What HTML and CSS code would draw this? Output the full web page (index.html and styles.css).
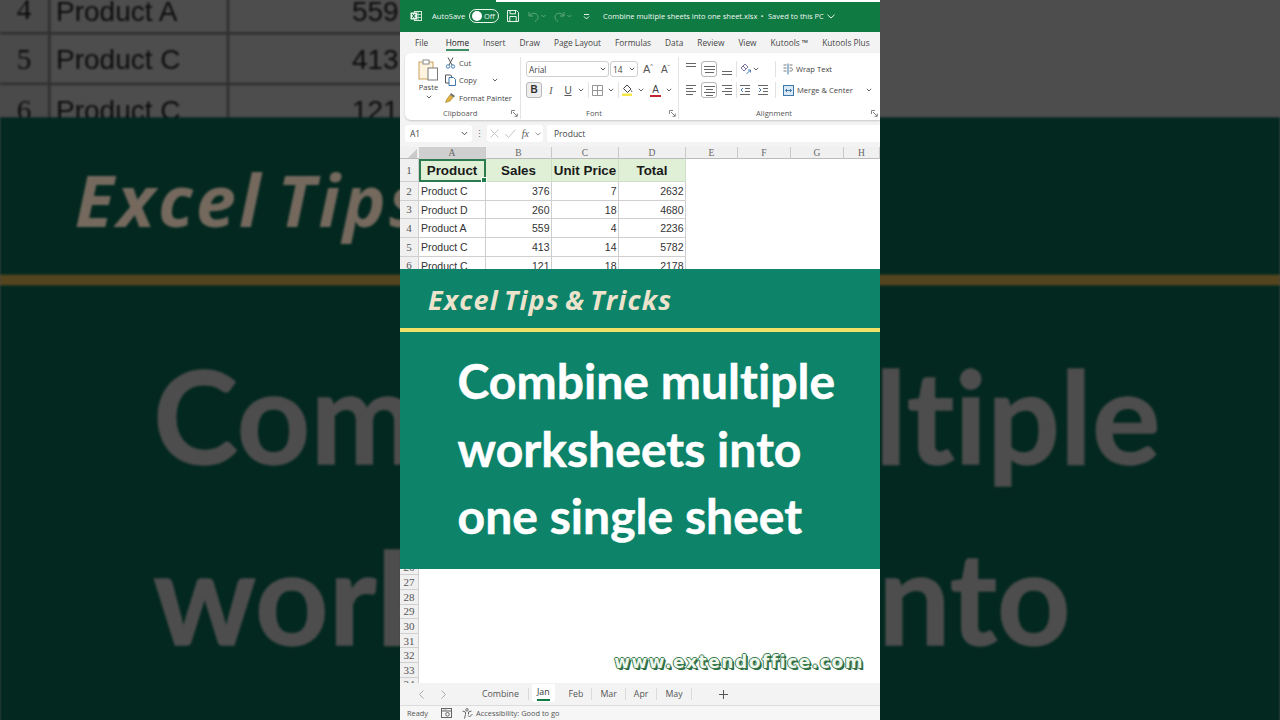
FILE: index.html
```html
<!DOCTYPE html>
<html lang="en">
<head>
<meta charset="utf-8">
<title>Combine multiple worksheets into one single sheet</title>
<link rel="stylesheet" href="styles.css">
</head>
<body>
<div class="stage">
  <div class="backdrop" aria-hidden="true">
    <div class="sheet backdrop-sheet">
      <div class="row"><span class="rh">4</span><span class="c">Product A</span><span class="c n">559</span><span class="c n">4</span><span class="c n">2236</span></div>
      <div class="row"><span class="rh">5</span><span class="c">Product C</span><span class="c n">413</span><span class="c n">14</span><span class="c n">5782</span></div>
      <div class="row"><span class="rh">6</span><span class="c">Product C</span><span class="c n">121</span><span class="c n">18</span><span class="c n">2178</span></div>
    </div>
    <div class="banner">
      <div class="eyebrow">Excel Tips &amp; Tricks</div>
      <h1 class="headline">Combine multiple<br>worksheets into<br>one single sheet</h1>
    </div>
  </div>

  <main class="panel">
    <header class="titlebar">
      <svg class="ico i-xl" width="12" height="12" viewBox="0 0 12 12"><rect x="4.5" y="1.5" width="7" height="9" fill="none" stroke="#d5e9dc"/><path d="M5 4.5h6M5 7.5h6M8 2v8" stroke="#d5e9dc" stroke-width=".8"/><rect x=".5" y="2.5" width="6.5" height="7" fill="#eef6f1"/><path d="M2.2 4l3 4M5.2 4l-3 4" stroke="#107c41" stroke-width="1.1"/></svg>
      <span class="autosave">AutoSave</span>
      <span class="toggle"><span class="knob"></span><span class="off">Off</span></span>
      <svg class="ico i-save" width="12" height="12" viewBox="0 0 12 12" fill="none" stroke="#e8f3ec" stroke-width="1"><path d="M.5.500h9l2 2v9H.5z"/><path d="M3 .8v3h5.500v-3M2.800 11V6.500h6.400V11"/></svg>
      <svg class="ico i-undo" width="11" height="11" viewBox="0 0 11 11" fill="none" stroke="#5fa67f" stroke-width="1"><path d="M1 1v4h4M1.300 5C3 2 7 1.500 9 3.500c2 2.200 1 5-2 7"/></svg>
      <svg class="ico i-chev dim-chev" width="5" height="4" viewBox="0 0 5 4" fill="none" stroke="#5fa67f"><path d="M.5 1l2 2 2-2"/></svg>
      <svg class="ico i-redo" width="11" height="11" viewBox="0 0 11 11" fill="none" stroke="#5fa67f" stroke-width="1"><path d="M10 1v4H6M9.700 5C8 2 4 1.500 2 3.500c-2 2.200-1 5 2 7"/></svg>
      <svg class="ico i-chev dim-chev" width="5" height="4" viewBox="0 0 5 4" fill="none" stroke="#5fa67f"><path d="M.5 1l2 2 2-2"/></svg>
      <svg class="ico i-custom" width="7" height="7" viewBox="0 0 7 7" fill="none" stroke="#e8f3ec"><path d="M1 1.500h5M1 3.500l2.500 2.500L6 3.500"/></svg>
      <span class="doc">Combine multiple sheets into one sheet.xlsx</span>
      <span class="doc-dot">•</span>
      <span class="doc">Saved to this PC</span>
      <svg class="ico i-doc-chev" width="8" height="5" viewBox="0 0 8 5" fill="none" stroke="#e8f3ec"><path d="M.5.800L4 4l3.500-3.200"/></svg>
    </header>

    <nav class="tabs">
      <span class="first">File</span><span class="on">Home</span><span>Insert</span><span>Draw</span><span>Page Layout</span><span>Formulas</span><span>Data</span><span>Review</span><span>View</span><span>Kutools ™</span><span>Kutools Plus</span>
    </nav>

    <section class="ribbon">
      <div class="grp g-clip">
        <div class="grp-body clip-body">
          <div class="paste">
            <svg width="21" height="22" viewBox="0 0 21 22" fill="none"><rect x="1" y="3" width="14" height="17" fill="#fdf3df" stroke="#c9a25c"/><rect x="5" y="1" width="6" height="4" fill="#fff" stroke="#8a8a8a"/><rect x="10" y="9" width="9.500" height="12" fill="#fff" stroke="#7a7a7a"/></svg>
            <span>Paste</span>
            <svg class="chev" width="6" height="4" viewBox="0 0 6 4" fill="none" stroke="#666"><path d="M.8.800L3 3l2.200-2.200"/></svg>
          </div>
          <ul class="clip-list">
            <li><svg width="10" height="12" viewBox="0 0 10 12" fill="none" stroke="#555"><path d="M2.500 .5L6.500 8M7.500 .5L3.500 8"/><circle cx="2.500" cy="9.500" r="1.700" stroke="#4a7fb5"/><circle cx="7.500" cy="9.500" r="1.700" stroke="#4a7fb5"/></svg><span>Cut</span></li>
            <li><svg width="11" height="12" viewBox="0 0 11 12" fill="none" stroke="#555"><path d="M.5 1h5l1 1v7h-6z"/><path d="M4 3.500h4.500l2 2v6H4z" fill="#fff" stroke="#3f78ad"/></svg><span>Copy</span><svg class="copy-chev" width="6" height="4" viewBox="0 0 6 4" fill="none" stroke="#666"><path d="M.8.800L3 3l2.200-2.200"/></svg></li>
            <li><svg width="11" height="11" viewBox="0 0 11 11"><path d="M6 1l4 3-1.500 1.500-3.500-3z" fill="#6d6d6d"/><path d="M5 3l3 2.500L5 9 .5 10.500 2 7z" fill="#e2b13c" stroke="#8a6a18" stroke-width=".5"/></svg><span>Format Painter</span></li>
          </ul>
        </div>
        <div class="grp-foot"><i></i><span>Clipboard</span><svg class="launch" width="7" height="7" viewBox="0 0 7 7" fill="none" stroke="#777" stroke-width=".9"><path d="M.5 4V.5H4M2 2l4 4M3.500 6.300h2.800V3.500"/></svg></div>
      </div>

      <div class="grp g-font">
        <div class="grp-body font-body">
          <div class="font-row">
            <span class="sel sel-name">Arial<svg width="6" height="4" viewBox="0 0 6 4" fill="none" stroke="#555"><path d="M.8.800L3 3l2.200-2.200"/></svg></span>
            <span class="sel sel-size">14<svg width="6" height="4" viewBox="0 0 6 4" fill="none" stroke="#555"><path d="M.8.800L3 3l2.200-2.200"/></svg></span>
            <span class="grow">A<sup>^</sup></span>
            <span class="grow shrink">A<sup>ˇ</sup></span>
          </div>
          <div class="font-row row-b">
            <span class="fbtn bold">B</span>
            <span class="fbtn ital">I</span>
            <span class="fbtn und">U</span>
            <svg class="mini" width="6" height="4" viewBox="0 0 6 4" fill="none" stroke="#666"><path d="M.8.800L3 3l2.200-2.200"/></svg>
            <i class="vsep"></i>
            <svg class="i-border" width="11" height="11" viewBox="0 0 11 11" fill="none" stroke="#8a8a8a" stroke-width=".9"><path d="M.5.500h10v10H.500zM5.500.5v10M.5 5.500h10"/></svg>
            <svg class="mini" width="6" height="4" viewBox="0 0 6 4" fill="none" stroke="#666"><path d="M.8.800L3 3l2.200-2.200"/></svg>
            <i class="vsep"></i>
            <svg class="i-fill" width="11" height="12" viewBox="0 0 11 12" fill="none"><path d="M5 1l4 4-3.500 3.500-4-4z" stroke="#444"/><path d="M9.500 6c.8 1 1 1.500.5 2-.6.300-1-.4-.5-2z" fill="#444"/><rect x="0" y="9.500" width="10" height="2.500" fill="#f6e84a"/></svg>
            <svg class="mini" width="6" height="4" viewBox="0 0 6 4" fill="none" stroke="#666"><path d="M.8.800L3 3l2.200-2.200"/></svg>
            <span class="color-a">A</span>
            <svg class="mini" width="6" height="4" viewBox="0 0 6 4" fill="none" stroke="#666"><path d="M.8.800L3 3l2.200-2.200"/></svg>
          </div>
        </div>
        <div class="grp-foot"><i></i><span>Font</span><svg class="launch" width="7" height="7" viewBox="0 0 7 7" fill="none" stroke="#777" stroke-width=".9"><path d="M.5 4V.5H4M2 2l4 4M3.500 6.300h2.800V3.500"/></svg></div>
      </div>

      <div class="grp g-align">
        <div class="grp-body align-body">
          <div class="align-row">
            <svg class="al" width="10" height="16" viewBox="0 0 10 16" stroke="#666"><path d="M0 2.500h10M0 5.500h10"/></svg>
            <span class="boxed"><svg width="11" height="8" viewBox="0 0 11 8" stroke="#666"><path d="M0 1.500h11M0 4.500h11M1 7.500h9"/></svg></span>
            <svg class="al" width="10" height="16" viewBox="0 0 10 16" stroke="#666"><path d="M0 10.500h10M0 13.500h10"/></svg>
            <i class="vsep"></i>
            <svg class="orient" width="11" height="12" viewBox="0 0 11 12" fill="none" stroke="#7a74a8"><path d="M1 5l4-4 3 3-4 4zM3 3l3 3"/><path d="M6.500 11l4-4M8 7h2.500v2.500" stroke="#4a7fb5"/></svg>
            <svg class="mini" width="6" height="4" viewBox="0 0 6 4" fill="none" stroke="#666"><path d="M.8.800L3 3l2.200-2.200"/></svg>
            <i class="vsep tall"></i>
            <span class="wide"><svg width="10" height="12" viewBox="0 0 10 12" fill="none" stroke="#3f78ad"><path d="M5 .5v11"/><path d="M.5 2h3M.5 5h3M.5 8h3M6.500 2h3M6.500 5h1.500c2 0 2 3 0 3H6.500" stroke="#777"/></svg><span>Wrap Text</span></span>
          </div>
          <div class="align-row">
            <svg class="al" width="10" height="12" viewBox="0 0 10 12" stroke="#666"><path d="M0 1.500h10M0 4.500h7M0 7.500h10M0 10.500h7"/></svg>
            <span class="boxed"><svg width="11" height="11" viewBox="0 0 11 11" stroke="#666"><path d="M0 1.500h11M2 4.500h7M0 7.500h11M2 10.500h7"/></svg></span>
            <svg class="al" width="10" height="12" viewBox="0 0 10 12" stroke="#666"><path d="M0 1.500h10M3 4.500h7M0 7.500h10M3 10.500h7"/></svg>
            <i class="vsep"></i>
            <svg class="ind" width="10" height="10" viewBox="0 0 10 10" fill="none" stroke="#666"><path d="M0 .5h10M5 3.500h5M5 6.500h5M0 9.500h10"/><path d="M3 3L1 5l2 2" stroke="#3f78ad"/></svg>
            <svg class="ind ind2" width="10" height="10" viewBox="0 0 10 10" fill="none" stroke="#666"><path d="M0 .5h10M5 3.500h5M5 6.500h5M0 9.500h10"/><path d="M1 3l2 2-2 2" stroke="#3f78ad"/></svg>
            <i class="vsep tall"></i>
            <span class="wide"><svg width="11" height="11" viewBox="0 0 11 11" fill="#dbe9f5" stroke="#3f78ad"><rect x=".5" y=".5" width="10" height="10"/><path d="M2.500 5.500h6M4 4L2.500 5.500 4 7M7 4l1.500 1.500L7 7" fill="none"/></svg><span>Merge &amp; Center</span><svg class="merge-chev" width="6" height="4" viewBox="0 0 6 4" fill="none" stroke="#666"><path d="M.8.800L3 3l2.200-2.200"/></svg></span>
          </div>
        </div>
        <div class="grp-foot"><i></i><span>Alignment</span><svg class="launch" width="7" height="7" viewBox="0 0 7 7" fill="none" stroke="#777" stroke-width=".9"><path d="M.5 4V.5H4M2 2l4 4M3.500 6.300h2.800V3.500"/></svg></div>
      </div>
    </section>

    <div class="fbar">
      <span class="namebox">A1<svg width="7" height="5" viewBox="0 0 7 5" fill="none" stroke="#555"><path d="M.8 1L3.500 3.800 6.200 1"/></svg></span>
      <span class="dots">⋮</span>
      <span class="fx-btns">
        <svg width="9" height="9" viewBox="0 0 9 9" stroke="#c4c4c4" fill="none"><path d="M.5.500l8 8M8.500.500l-8 8"/></svg>
        <svg width="11" height="9" viewBox="0 0 11 9" stroke="#c4c4c4" fill="none"><path d="M.5 5l3 3.500L10.500 .5"/></svg>
        <em>fx</em>
        <svg width="6" height="4" viewBox="0 0 6 4" fill="none" stroke="#999"><path d="M.5.800L3 3l2.500-2.200"/></svg>
      </span>
      <span class="finput">Product</span>
    </div>

    <div class="colhead">
      <span class="corner"><svg width="9" height="9" viewBox="0 0 9 9"><path d="M9 0v9H0z" fill="#c9c9c9"/></svg></span>
      <span class="ch active">A</span><span class="ch">B</span><span class="ch">C</span><span class="ch">D</span><span class="ch e">E</span><span class="ch e">F</span><span class="ch e">G</span><span class="ch e">H</span>
    </div>

    <div class="sheet">
      <div class="row row-top"><span class="rh">1</span><span class="c h sel-cell">Product</span><span class="c h">Sales</span><span class="c h">Unit Price</span><span class="c h">Total</span></div>
      <div class="row"><span class="rh">2</span><span class="c">Product C</span><span class="c n">376</span><span class="c n">7</span><span class="c n">2632</span></div>
      <div class="row"><span class="rh">3</span><span class="c">Product D</span><span class="c n">260</span><span class="c n">18</span><span class="c n">4680</span></div>
      <div class="row"><span class="rh">4</span><span class="c">Product A</span><span class="c n">559</span><span class="c n">4</span><span class="c n">2236</span></div>
      <div class="row"><span class="rh">5</span><span class="c">Product C</span><span class="c n">413</span><span class="c n">14</span><span class="c n">5782</span></div>
      <div class="row"><span class="rh">6</span><span class="c">Product C</span><span class="c n">121</span><span class="c n">18</span><span class="c n">2178</span></div>
      <div class="hidden-rows"></div>
      <div class="row slim"><span class="rh">26</span></div>
      <div class="row slim"><span class="rh">27</span></div>
      <div class="row slim"><span class="rh">28</span></div>
      <div class="row slim"><span class="rh">29</span></div>
      <div class="row slim"><span class="rh">30</span></div>
      <div class="row slim"><span class="rh">31</span></div>
      <div class="row slim"><span class="rh">32</span></div>
      <div class="row slim"><span class="rh">33</span></div>
      <div class="row slim"><span class="rh">34</span></div>
      <div class="watermark">www.extendoffice.com</div>
    </div>

    <div class="sheettabs">
      <svg class="nav" width="5" height="9" viewBox="0 0 5 9" fill="none" stroke="#aaa"><path d="M4.500.500l-4 4 4 4"/></svg>
      <svg class="nav nav2" width="5" height="9" viewBox="0 0 5 9" fill="none" stroke="#aaa"><path d="M.5.500l4 4-4 4"/></svg>
      <span class="st st-first">Combine</span><span class="st st-on">Jan</span><span class="st">Feb</span><span class="st">Mar</span><span class="st">Apr</span><span class="st">May</span>
      <svg class="plus" width="9" height="9" viewBox="0 0 9 9" stroke="#555"><path d="M4.500 0v9M0 4.500h9"/></svg>
    </div>

    <footer class="status">
      <span>Ready</span>
      <svg class="i-macro" width="11" height="10" viewBox="0 0 11 10" fill="none" stroke="#666"><rect x=".5" y=".5" width="10" height="9"/><path d="M.5 3h10M3 1.500v1M5 1.500v1"/><circle cx="6.500" cy="6.300" r="1.800"/></svg>
      <svg class="i-acc" width="11" height="11" viewBox="0 0 11 11" fill="none" stroke="#666"><circle cx="5" cy="1.800" r="1.200"/><path d="M.5 3l3 1v2.500L2.500 10.500M9.500 3l-3 1v2.500M6 7.500l1.500 1.500 3-3"/></svg>
      <span>Accessibility: Good to go</span>
    </footer>

    <div class="banner">
      <div class="eyebrow">Excel Tips &amp; Tricks</div>
      <h1 class="headline">Combine multiple<br>worksheets into<br>one single sheet</h1>
    </div>
  </main>
</div>
</body>
</html>
```
FILE: styles.css
```css
* { box-sizing: border-box; }
html, body { margin: 0; padding: 0; }
body { background: #4d4d4d; font-family: "Open Sans", "Liberation Sans", sans-serif; }
svg { display: block; flex: none; }

.stage {
  position: relative;
  width: 1280px;
  height: 720px;
  overflow: hidden;
  background: #4d4d4d;
}

/* enlarged, dimmed copy behind the video column */
.backdrop {
  position: absolute;
  left: 400px;
  top: 0;
  width: 480px;
  height: 720px;
  transform: scale(2.6667);
  transform-origin: center;
  filter: blur(.35px);
  --rh-bg: #4a4a4a;
  --rh-fg: #0c0c0c;
  --cell-bg: #4d4d4d;
  --cell-fg: #0c0c0c;
  --line: #2f2f2f;
  --teal: #03281f;
  --cream: #75695e;
  --yellow: #54451f;
  --white: #4d4d4d;
}
.backdrop-sheet { padding-top: 219.600px; height: 280px; overflow: hidden; flex: none; background: #4d4d4d; }

.panel {
  position: relative;
  width: 480px;
  height: 720px;
  margin-left: 400px;
  display: flex;
  flex-direction: column;
  background: #f3f3f3;
  overflow: hidden;
  color: #444;
  --rh-bg: #f0f0f0;
  --rh-fg: #555;
  --cell-bg: #fff;
  --cell-fg: #333;
  --line: #cfcfcf;
  --teal: #0d846a;
  --cream: #ece3cd;
  --yellow: #f0e268;
  --white: #fff;
}

/* title bar */
.titlebar {
  height: 32px;
  flex: none;
  display: flex;
  align-items: center;
  padding: 0 0 0 10px;
  background: #107a43;
  color: #f2f8f4;
  font-size: 7.600px;
}
.i-xl { margin-right: 10px; }
.autosave { width: 37px; }
.toggle {
  width: 30px; height: 14px;
  border: 1px solid #eef6f1;
  border-radius: 7px;
  display: flex; align-items: center;
  padding-left: 2px;
  font-size: 7.500px;
}
.knob { width: 10px; height: 10px; border-radius: 50%; background: #fff; margin-right: 2px; flex: none; }
.i-save { margin-left: 8px; }
.i-undo { margin-left: 9px; }
.i-redo { margin-left: 8px; }
.dim-chev { margin-left: 2px; }
.i-custom { margin-left: 11px; }
.doc { font-size: 7.500px; white-space: nowrap; }
.i-custom + .doc { margin-left: 13px; }
.doc-dot { margin: 0 4.500px 0 3.500px; font-size: 7px; }
.i-doc-chev { margin-left: 3px; }
.titlebar::before {
  content: "";
  position: absolute;
  left: 96px; right: 0; top: 0;
  height: 2px;
  background: #fff;
}

/* ribbon tabs */
.tabs {
  height: 21px;
  flex: none;
  display: flex;
  gap: 14px;
  align-items: center;
  padding-left: 15px;
  font-size: 8.300px;
  color: #444;
  white-space: nowrap;
}
.tabs .first { margin-right: 3.500px; }
.tabs span { position: relative; }
.tabs .on { color: #222; }
.tabs .on::after {
  content: "";
  position: absolute;
  left: 0; right: 0; bottom: -3px;
  height: 2px;
  background: #3f8f66;
}

/* ribbon */
.ribbon {
  height: 67px;
  flex: none;
  margin-left: 5px;
  display: flex;
  background: #fff;
  border-radius: 6px 0 0 6px;
  box-shadow: 0 1px 2px rgba(0,0,0,.18);
  font-size: 7.600px;
  color: #444;
}
.grp { display: flex; flex-direction: column; border-right: 1px solid #e4e4e4; margin: 4px 0 1px; flex: none; }
.g-clip { width: 116px; }
.g-font { width: 158px; }
.g-align { flex: 1 1 0; min-width: 0; border-right: 0; }
.grp-body { flex: 1; min-height: 0; display: flex; }
.grp-foot {
  height: 12px;
  flex: none;
  display: grid;
  align-items: center;
  font-size: 7.600px;
  line-height: 12px;
  color: #555;
  padding-right: 2px;
}
.g-clip .grp-foot { grid-template-columns: 38px auto 1fr; }
.g-font .grp-foot { grid-template-columns: 65px auto 1fr; }
.g-align .grp-foot { grid-template-columns: 77px auto 1fr; }
.launch { justify-self: end; }

.clip-body { padding-left: 13px; }
.paste { width: 21px; display: flex; flex-direction: column; align-items: center; padding-top: 2px; }
.paste span { line-height: 12px; }
.chev { margin-top: 2px; }
.clip-list { list-style: none; margin: -3px 0 0 6px; padding: 0; width: 72px; }
.clip-list li { height: 17.500px; display: flex; align-items: center; gap: 3px; white-space: nowrap; }
.clip-list svg:first-child { width: 11px; }
.copy-chev { margin-left: 12px; }

.font-body { flex-direction: column; padding: 4px 0 0 5px; }
.font-row { display: flex; align-items: center; height: 16px; }
.row-b { margin-top: 5px; }
.sel {
  height: 16px;
  border: 1px solid #cfcfcf;
  border-radius: 3px;
  display: flex; align-items: center; justify-content: space-between;
  padding: 0 2px;
  font-size: 8.300px;
}
.sel-name { width: 83px; margin-right: 1px; }
.sel-size { width: 28px; }
.grow { width: 12px; margin-left: 5px; font-size: 11px; color: #555; font-family: "Liberation Sans", sans-serif; position: relative; }
.shrink { margin-left: 6px; font-size: 10px; }
.grow sup { font-size: 6px; line-height: 0; }
.fbtn { font-family: "Liberation Serif", serif; font-size: 10px; color: #555; text-align: center; }
.bold {
  width: 16px; height: 16px;
  border: 1px solid #b8b8b8;
  border-radius: 3px;
  background: #eee;
  font-weight: 700;
  font-family: "Liberation Sans", sans-serif;
  line-height: 14px;
  color: #333;
}
.ital { width: 10px; margin-left: 4px; font-style: italic; }
.und { width: 10px; margin-left: 7px; text-decoration: underline; font-family: "Liberation Sans", sans-serif; }
.mini { margin-left: 5px; }
.vsep { width: 1px; height: 16px; background: #e2e2e2; margin: 0 3px 0 4px; flex: none; }
.color-a {
  width: 11px; margin-left: 6px;
  font-family: "Liberation Sans", sans-serif;
  font-size: 10px; line-height: 11px;
  text-align: center;
  color: #444;
  border-bottom: 2px solid #c8202c;
}

.align-body { flex-direction: column; padding: 3px 0 0 7px; }
.align-row { display: flex; align-items: center; height: 18px; }
.align-row + .align-row { margin-top: 3px; }
.boxed {
  width: 16px; height: 16px;
  margin: 0 5px;
  border: 1px solid #b5b5b5;
  border-radius: 3px;
  display: flex; align-items: center; justify-content: center;
  flex: none;
}
.align-row .vsep { margin: 0 3px 0 4px; }
.align-row .vsep.tall { margin: 0 4px 0 0; }
.align-row .orient + .mini { margin-left: 2px; margin-right: 16px; }
.ind2 { margin-left: 8px; margin-right: 7px; }
.wide { display: flex; align-items: center; gap: 3px; margin-left: 3px; white-space: nowrap; }
.merge-chev { margin-left: 10px; }

/* formula bar */
.fbar {
  height: 17px;
  flex: none;
  margin: 5px 0 0 5px;
  display: flex;
  align-items: center;
  font-size: 8.500px;
  color: #444;
}
.namebox {
  width: 67px; height: 17px;
  background: #fff;
  border-radius: 3px;
  padding: 0 4px 0 5px;
  display: flex; align-items: center; justify-content: space-between;
}
.dots { width: 15px; text-align: center; color: #666; font-size: 9px; }
.fx-btns {
  width: 56px; height: 17px;
  background: #fff;
  border-radius: 3px;
  display: flex; align-items: center; justify-content: space-between;
  padding: 0 2px 0 3px;
}
.fx-btns em { font-family: "Liberation Serif", serif; font-size: 10px; color: #555; }
.finput {
  flex: 1; height: 17px;
  margin-left: 4px;
  background: #fff;
  padding-left: 7px;
  display: flex; align-items: center;
  border-radius: 3px 0 0 3px;
}

/* grid */
.colhead {
  height: 12px;
  margin-top: 5px;
  flex: none;
  display: grid;
  grid-template-columns: 19px 67px 66px 67px 67px 52px 53px 53px 36px;
  background: #f0f0f0;
  font-family: "Liberation Serif", serif;
  font-size: 9.500px;
  color: #666;
  text-align: center;
  line-height: 13px;
  border-bottom: 1px solid #bbb;
}
.corner { display: flex; justify-content: flex-end; padding: 2px 2px 0 0; }
.ch { border-right: 1px solid #c9c9c9; }
.ch.active { background: #cfcfcf; border-bottom: 1px solid #2d7a4f; }

.sheet { position: relative; flex: 1; min-height: 0; overflow: hidden; background: var(--cell-bg); }
.row {
  height: 18.670px;
  display: grid;
  grid-template-columns: 19px 67px 66px 67px 67px;
  align-items: stretch;
  font-family: "Liberation Sans", Arial, sans-serif;
  font-size: 10.500px;
  color: var(--cell-fg);
}
.rh {
  background: var(--rh-bg);
  color: var(--rh-fg);
  border-right: 1px solid var(--line);
  border-bottom: 1px solid var(--line);
  font-family: "Liberation Serif", serif;
  font-size: 11px;
  line-height: 1;
  padding-top: 1px;
  overflow: hidden;
  display: flex; align-items: center; justify-content: center;
}
.c {
  display: flex;
  align-items: center;
  padding: 1px 1.500px 0 2px;
  line-height: 1;
  border-right: 1px solid var(--line);
  border-bottom: 1px solid var(--line);
  white-space: nowrap;
  overflow: hidden;
}
.c.n { justify-content: flex-end; }
.c.h {
  justify-content: center;
  padding: 1px 0 0;
  background: #dff0d6;
  font-weight: 700;
  font-size: 13.400px;
  color: #1a1a1a;
  border-color: #cddfc6;
}
.row-top { height: 23px; }
.sel-cell { position: relative; outline: 2px solid #2b7a50; outline-offset: -2px; overflow: visible; }
.sel-cell::after {
  content: "";
  position: absolute;
  right: -2px; bottom: -2px;
  width: 4px; height: 4px;
  background: #1f7a4a;
  border: 1px solid #fff;
}
.hidden-rows { height: 285.400px; width: 19px; background: var(--rh-bg); }
.slim { height: 14.640px; }
.watermark {
  position: absolute;
  right: 16px;
  bottom: 11px;
  font-family: "DejaVu Sans", sans-serif;
  font-weight: 700;
  font-size: 17px;
  line-height: 20px;
  letter-spacing: 1.550px;
  white-space: nowrap;
  color: #f0f7ef;
  text-shadow: 1px 0 0 #3c7d50, -1px 0 0 #3c7d50, 0 -1px 0 #3c7d50, 0 1px 0 #3c7d50, 1px 1px 0 #2f6b43, 2px 2px 0 #2f6b43;
}

/* sheet tabs */
.sheettabs {
  height: 23px;
  flex: none;
  display: flex;
  align-items: center;
  padding-left: 19px;
  background: #f3f3f3;
  border-bottom: 1px solid #dcdcdc;
  font-size: 8.800px;
  color: #555;
}
.nav2 { margin-left: 17px; }
.st { padding: 0 8px; position: relative; line-height: 17px; }
.st-first { margin-left: 28px; margin-right: 3px; padding-right: 9px; border-right: 1px solid #dadada; line-height: 12px; }
.st-on {
  align-self: flex-start;
  margin: 1px 6px 0 0;
  height: 18px;
  padding: 0 5px;
  background: #fff;
  color: #333;
  border-radius: 0 0 3px 3px;
  font-weight: 500;
}
.st-on::after {
  content: "";
  position: absolute;
  left: 5px; right: 5px; bottom: 1.500px;
  height: 1.500px;
  background: #107c41;
}
.sheettabs .st:not(.st-first):not(.st-on) { padding: 0 8px; border-right: 1px solid #dadada; line-height: 12px; }
.plus { margin-left: 27px; }

/* status bar */
.status {
  height: 14px;
  flex: none;
  display: flex;
  align-items: center;
  padding-left: 7px;
  font-size: 7.400px;
  color: #555;
  background: #f6f6f6;
}
.i-macro { margin-left: 13px; }
.i-acc { margin: 0 3px 0 10px; }

/* title card */
.banner {
  position: absolute;
  left: 0;
  top: 269px;
  width: 480px;
  height: 300px;
  background: var(--teal);
}
.eyebrow {
  height: 59px;
  padding: 15px 0 0 28px;
  font-family: "Open Sans", Lato, sans-serif;
  font-weight: 700;
  font-style: italic;
  font-size: 27px;
  line-height: 32px;
  letter-spacing: 1.150px;
  word-spacing: -3px;
  color: var(--cream);
  white-space: nowrap;
}
.headline {
  margin: 0;
  border-top: 4px solid var(--yellow);
  padding: 15px 0 0 57.500px;
  font-family: Lato, "Open Sans", sans-serif;
  font-weight: 700;
  font-size: 48px;
  line-height: 67.500px;
  letter-spacing: .05px;
  -webkit-text-stroke: .5px var(--white);
  color: var(--white);
  white-space: nowrap;
}
```
